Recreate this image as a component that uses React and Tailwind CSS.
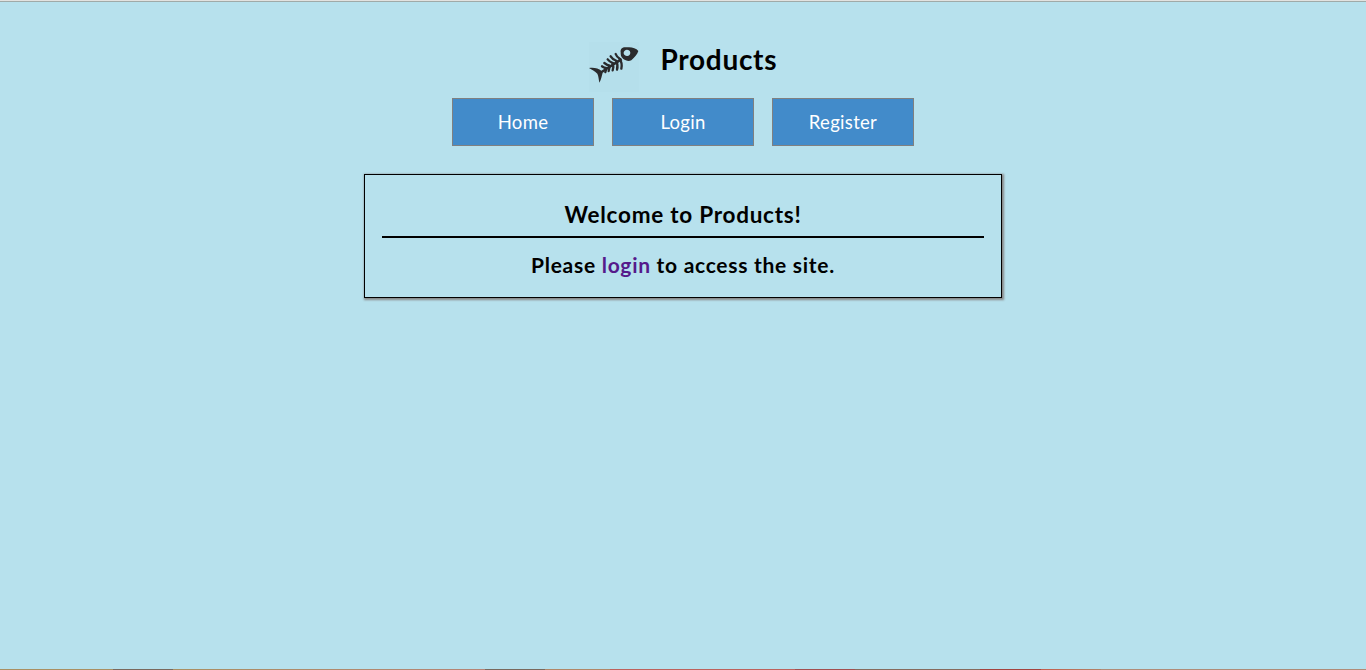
const navItems = ["Home", "Login", "Register"];

function FishLogo() {
  return (
    <div className="h-[50px] w-[50px] bg-[#b5dfeb]">
      <svg viewBox="0 0 150 150" className="h-[50px] w-[50px]" fill="#2b2b2d">
        <path
          fillRule="evenodd"
          d="M95 31C93 20 102 14 113 16C125 14 141 17 148 27C145 37 137 45 127 55C117 59 110 55 103 51C95 45 95 38 95 31ZM107 26C101 32 105 40 111 41C118 44 124 39 124 32C123 24 113 21 107 26Z"
        />
        <path d="M0 78C13 75 29 79 37 86L96 48L100 55L41 92C38 101 37 113 31 122C29 112 29 102 25 95C18 87 8 84 0 78Z" />
        <g fill="none" stroke="#2b2b2d" strokeWidth="7" strokeLinecap="round">
          <path d="M93 51C88 48 82 42 80 36M83 57C75 54 68 48 65 43M73 64C66 61 59 56 56 52M62 71C56 70 50 66 46 63M51 78C46 78 42 75 39 73" />
          <path d="M92 51C98 59 99 70 97 80M82 58C86 66 86 76 84 83M71 65C74 72 73 80 71 85M60 72C62 77 61 83 59 87M50 79C52 83 51 87 49 90" />
        </g>
      </svg>
    </div>
  );
}

export default function App() {
  return (
    <div className="flex h-[670px] flex-col overflow-hidden bg-[#b7e1ed] font-['Lato',sans-serif] text-black">
      <div className="h-0.5 shrink-0 border-b border-[#a0aaa8] bg-[#e2e2e0]" />
      <header className="flex h-24 shrink-0 justify-center pt-[40px]">
        <FishLogo />
        <h1 className="ml-[22px] mr-px -mt-[3px] h-10 w-[116px] whitespace-nowrap text-[28px] leading-10 font-bold tracking-[0.7px]">Products</h1>
      </header>
      <nav className="flex shrink-0 justify-center gap-[18px]">
        {navItems.map((item) => (
          <a
            key={item}
            href="#"
            className="flex h-12 w-[142px] items-center justify-center border border-[#808080] bg-[#428bca] pt-0.5 text-[18.5px] tracking-[0.3px] text-white"
          >
            {item}
          </a>
        ))}
      </nav>
      <main className="mx-auto mt-7 h-[124px] w-[638px] shrink-0 border border-black px-[17px] text-center shadow-[1px_1px_2px_1px_#888888]">
        <h2 className="h-[63px] border-b-2 border-black pt-6 text-[22.5px] leading-8 font-bold tracking-[0.75px]">Welcome to Products!</h2>
        <p className="pt-[11px] text-[21px] leading-8 font-bold tracking-[0.72px]">
          Please <a href="#" className="text-[#551a8b]">login</a> to access the site.
        </p>
      </main>
      <footer className="mt-auto flex h-px shrink-0">
        <div className="w-[113px] bg-[#a98f62]" />
        <div className="w-[60px] bg-[#79695e]" />
        <div className="w-[312px] bg-linear-to-r from-[#a98f62] to-[#b68476]" />
        <div className="w-[60px] bg-[#79695e]" />
        <div className="w-[65px] bg-[#b18768]" />
        <div className="w-[185px] bg-[#bd625d]" />
        <div className="w-[60px] bg-[#a24f50]" />
        <div className="w-[125px] bg-[#866b5e]" />
        <div className="w-[61px] bg-[#a34440]" />
        <div className="w-[60px] bg-linear-to-r from-[#c45c4c] to-[#b08268]" />
        <div className="flex-1 bg-[#b08c78]" />
      </footer>
    </div>
  );
}
